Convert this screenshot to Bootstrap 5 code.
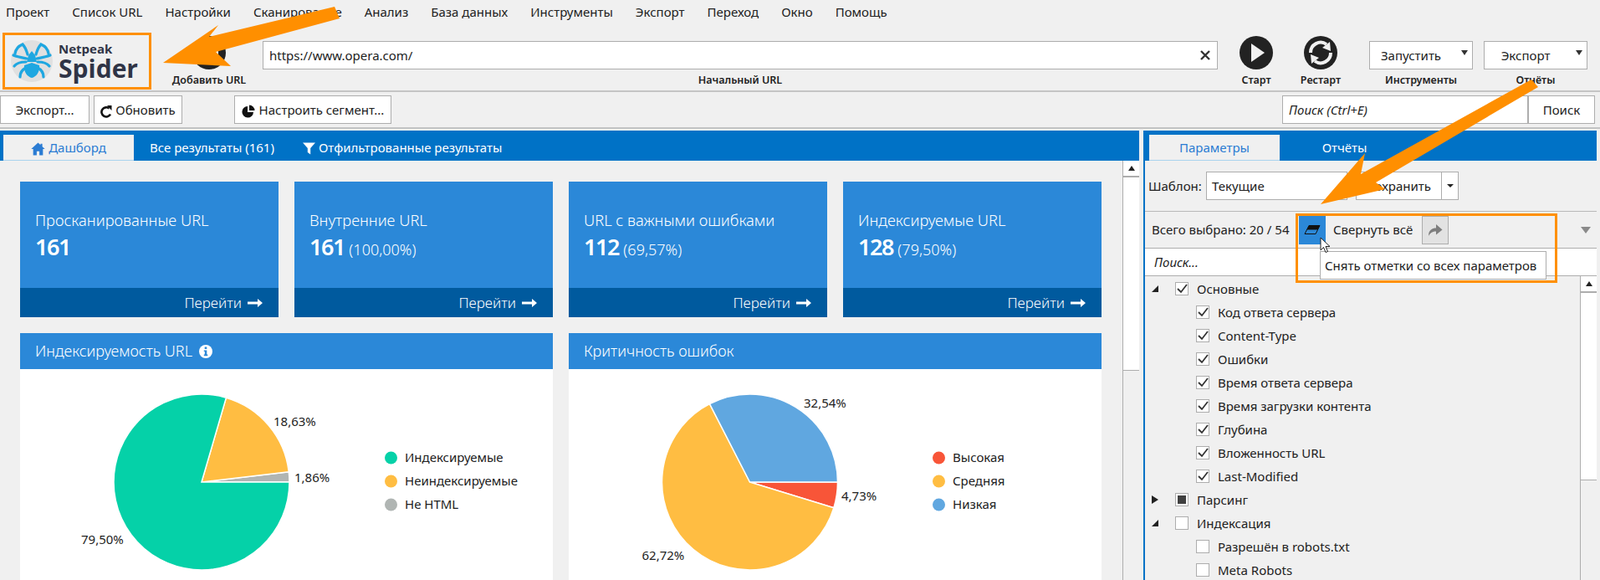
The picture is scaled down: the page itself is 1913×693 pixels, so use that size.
<!DOCTYPE html>
<html lang="ru">
<head>
<meta charset="UTF-8">
<title>Netpeak Spider</title>
<link href="https://cdn.jsdelivr.net/npm/bootstrap@5.3.2/dist/css/bootstrap.min.css" rel="stylesheet">
<style>
  html, body { height: 693px; overflow: hidden; }
  body { background: #f0f0f0; color: #222; font-family: "Noto Sans", "Liberation Sans", sans-serif; font-size: 15px; position: relative; }

  .menu-row { height: 28px; padding-left: 7px; gap: 27px; line-height: 28px; }

  .top-row { height: 82px; border-bottom: 2px solid #c4c4c4; }
  .logo-box { width: 178px; height: 68px; margin: 11px 0 0 3px; border: 3px solid #ff9000; gap: 7px; padding-left: 7px; }
  .logo-text { color: #2f3446; font-family: "Open Sans", sans-serif; font-weight: 700; }
  .logo-small { font-size: 15px; line-height: 18px; }
  .logo-big { font-size: 30px; line-height: 30px; }
  .tool-col { padding-top: 15px; }
  .field-col { padding-top: 21px; }
  .tool-label { font-size: 12.5px; font-weight: 600; line-height: 16px; margin-top: 5px; white-space: nowrap; }
  .col-add { width: 100px; margin-left: 19px; }
  .col-url { width: 1142px; margin-left: 14px; }
  .col-start { width: 60px; margin-left: 16px; }
  .col-restart { width: 60px; margin-left: 17px; }
  .col-run { width: 124px; margin-left: 28px; }
  .col-export { width: 124px; margin-left: 13px; }

  .win-btn, .win-btn:hover { background: #fff; border: 1px solid #adadad; border-radius: 0; color: #222; font-size: 15px; padding: 0 8px; height: 34px; line-height: 32px; white-space: nowrap; }
  .win-input, .win-input:focus { background: #fff; border: 1px solid #adadad; border-radius: 0; color: #222; font-size: 15px; height: 34px; padding: 0 7px; box-shadow: none; }
  .win-input::placeholder { color: #222; font-style: italic; opacity: 1; }
  .url-wrap .win-input { padding-right: 30px; }
  .url-clear { right: 9px; top: 11px; }
  .drop-btn { width: 124px; padding: 0 24px 0 0; }
  .drop-caret { right: 6px; top: 11px; width: 0; height: 0; border-left: 4px solid transparent; border-right: 4px solid transparent; border-top: 6px solid #333; }

  .action-row { height: 44px; padding-top: 4px; border-bottom: 2px solid #c4c4c4; }
  .btn-export { width: 107px; }
  .btn-refresh { width: 106px; margin-left: 5px; padding: 0 4px; }
  .btn-segment { width: 188px; margin-left: 62px; padding: 0 4px; }
  .find-input { width: 294px; margin-left: auto; }
  .find-btn { width: 80px; margin-right: 6px; }

  .main-row { margin-top: 2px; height: 537px; gap: 5px; }
  .left-side { width: 1362px; }
  .right-side { width: 542px; border-left: 2px solid #0072c6; }
  .tab-bar { background: #0072c6; height: 36px; padding: 5px 0 0 4px; flex-wrap: nowrap; }
  .right-side .tab-bar { padding-left: 5px; }
  .tab-bar .nav-link { color: #fff; height: 31px; line-height: 31px; padding: 0; text-align: center; font-size: 15px; white-space: nowrap; }
  .tab-bar .nav-link.active { background: #f0f0f0; color: #2b7cd3; border-bottom: 1px solid #a9d3ee; }
  .tab-dash { width: 156px; }
  .tab-all { margin-left: 17px; width: 153px; }
  .tab-filter { margin-left: 32px; }
  .tab-par { width: 156px; }
  .tab-rep { margin-left: 50px; width: 55px; }

  .dash-area { height: 501px; overflow: hidden; }
  .dash-inner { width: 1342px; padding: 25px 0 0 24px; }
  .stat-grid { display: grid; grid-template-columns: repeat(4, 309px); gap: 19px; }
  .stat-box { background: #2b88d8; color: #fff; height: 162px; }
  .stat-top { height: 127px; padding: 34px 0 0 19px; }
  .stat-name { font-size: 18.3px; line-height: 24px; font-weight: 300; white-space: nowrap; margin-left: -1px; }
  .stat-num { font-size: 27px; font-weight: 600; line-height: 38px; margin: 1px 0 0 -1px; letter-spacing: -1.5px; }
  .stat-pct { font-size: 18px; font-weight: 300; letter-spacing: 0; }
  .stat-foot { background: #005a9e; height: 35px; padding-right: 19px; gap: 7px; font-size: 17px; font-weight: 300; }
  .chart-grid { display: grid; grid-template-columns: repeat(2, 637px); gap: 19px; margin-top: 19px; }
  .chart-box { background: #fff; height: 295px; }
  .chart-head { background: #2b88d8; color: #fff; height: 43px; padding-left: 18px; gap: 8px; font-size: 18px; font-weight: 300; }
  .chart-box svg text { font-family: "Noto Sans", sans-serif; font-size: 15px; fill: #222; }

  .bar-track { width: 20px; border-left: 1px solid #adadad; }
  .bar-up { height: 20px; background: #fff; border-bottom: 2px solid #adadad; }
  .bar-thumb { background: #fff; border-bottom: 1px solid #adadad; }
  .dash-thumb { height: 231px; }
  .tree-thumb { height: 224px; }
  .bar-arrow { width: 0; height: 0; border-left: 4px solid transparent; border-right: 4px solid transparent; border-bottom: 6px solid #222; }

  .tpl-row { height: 61px; padding: 13px 0 0 4px; border-bottom: 1px solid #b9b9b9; }
  .tpl-label { width: 65px; line-height: 34px; white-space: nowrap; }
  .tpl-select { width: 169px; margin-left: 4px; padding: 0 6px; }
  .tpl-save { margin-left: 10px; }
  .tpl-save .win-btn:first-child { width: 103px; }
  .tpl-save .win-btn:last-child { width: 21px; padding: 0; margin-left: -1px; }
  .sel-row { height: 43px; padding-left: 8px; }
  .sel-count { width: 168px; white-space: nowrap; }
  .erase-btn { width: 32px; height: 34px; background: #2b88d8; margin-left: 8px; }
  .fold-text { margin-left: 9px; width: 106px; white-space: nowrap; }
  .redo-btn { width: 32px; height: 34px; background: #e2e2e2; border: 1px solid #adadad; }
  .sel-tri { margin-left: auto; margin-right: 7px; width: 0; height: 0; border-left: 6px solid transparent; border-right: 6px solid transparent; border-top: 8px solid #8a8a8a; }
  .tree-find { height: 34px; border-width: 1px 0; padding: 0 11px; }
  .tree-area { height: 365px; overflow: hidden; }
  .tree-list { padding-top: 1px; }
  .tree-item { height: 28px; white-space: nowrap; }
  .tree-tw { width: 36px; padding-left: 8px; }
  .tree-sub { padding-left: 61px; }
  .tw-open { width: 0; height: 0; border-bottom: 8px solid #222; border-left: 8px solid transparent; }
  .tw-shut { width: 0; height: 0; border-left: 8px solid #222; border-top: 5px solid transparent; border-bottom: 5px solid transparent; }
  .tick-box { width: 16px; height: 16px; background: #fff; border: 1px solid #adadad; margin-right: 10px; flex: none; }
  .tick-part { width: 10px; height: 10px; background: #404040; }

  .note-box { left: 1549px; top: 255px; width: 313px; height: 83px; border: 3px solid #ff9000; }
  .tip-box { left: 1578px; top: 300px; width: 271px; height: 34px; background: #fff; border: 1px solid #adadad; line-height: 32px; padding-left: 5px; white-space: nowrap; }
  .mouse-ptr { left: 1578px; top: 283px; }
  .arrow-layer { left: 0; top: 0; pointer-events: none; }
</style>
</head>
<body>

<div class="d-flex menu-row">
  <span>Проект</span><span>Список URL</span><span>Настройки</span><span>Сканирование</span><span>Анализ</span><span>База данных</span><span>Инструменты</span><span>Экспорт</span><span>Переход</span><span>Окно</span><span>Помощь</span>
</div>

<div class="d-flex align-items-start top-row">
  <div class="d-flex align-items-center logo-box">
    <svg width="50" height="50" viewBox="0 0 50 50">
      <circle cx="25" cy="25" r="25" fill="#e0e0e0"/>
      <g fill="none" stroke="#1ea7e1" stroke-linecap="round" stroke-width="3.2">
        <path d="M20 17 C18 10 16 7 14 5 C9 7 6 10 5 16"/><path d="M30 17 C32 10 34 7 36 5 C41 7 44 10 45 16"/>
        <path d="M19 22 C14 21 8 20 3 18"/><path d="M31 22 C36 21 42 20 47 18"/>
        <path d="M18 26 C12 26 7 27 4 31"/><path d="M32 26 C38 26 43 27 46 31"/>
        <path d="M18 33 C14 35 11 38 11 44"/><path d="M32 33 C36 35 39 38 39 44"/>
      </g>
      <path d="M25 13 L29 18 L31 26 H19 L21 18 Z" fill="#1ea7e1"/>
      <path d="M16 30 L25 27 L34 30 C35 38 30 44 25 45 C20 44 15 38 16 30 Z" fill="#1ea7e1"/>
    </svg>
    <div class="logo-text"><div class="logo-small">Netpeak</div><div class="logo-big">Spider</div></div>
  </div>

  <div class="d-flex flex-column align-items-center tool-col col-add">
    <svg width="40" height="40" viewBox="0 0 40 40"><circle cx="20" cy="20" r="20" fill="#222"/><path d="M18 9h4v9h9v4h-9v9h-4v-9H9v-4h9z" fill="#fff"/></svg>
    <div class="tool-label">Добавить URL</div>
  </div>

  <div class="d-flex flex-column align-items-center field-col col-url">
    <div class="position-relative w-100 url-wrap">
      <input class="form-control win-input" value="https://www.opera.com/">
      <svg class="position-absolute url-clear" width="12" height="12" viewBox="0 0 12 12"><path d="M1 1l10 10M11 1L1 11" stroke="#333" stroke-width="2.4"/></svg>
    </div>
    <div class="tool-label">Начальный URL</div>
  </div>

  <div class="d-flex flex-column align-items-center tool-col col-start">
    <svg width="40" height="40" viewBox="0 0 40 40"><circle cx="20" cy="20" r="20" fill="#222"/><path d="M14 9 L30 20 L14 31 Z" fill="#f0f0f0"/></svg>
    <div class="tool-label">Старт</div>
  </div>

  <div class="d-flex flex-column align-items-center tool-col col-restart">
    <svg width="40" height="40" viewBox="0 0 40 40"><circle cx="20" cy="20" r="20" fill="#222"/>
      <g fill="none" stroke="#f0f0f0" stroke-width="4"><path d="M8 20 A12 12 0 0 1 27 10"/><path d="M32 20 A12 12 0 0 1 13 30"/></g>
      <path d="M31 7 L32 18 L22 14 Z M9 33 L8 22 L18 26 Z" fill="#f0f0f0"/>
    </svg>
    <div class="tool-label">Рестарт</div>
  </div>

  <div class="d-flex flex-column align-items-center field-col col-run">
    <div class="position-relative">
      <button class="btn win-btn drop-btn">Запустить</button><span class="position-absolute drop-caret"></span>
    </div>
    <div class="tool-label">Инструменты</div>
  </div>

  <div class="d-flex flex-column align-items-center field-col col-export">
    <div class="position-relative">
      <button class="btn win-btn drop-btn">Экспорт</button><span class="position-absolute drop-caret"></span>
    </div>
    <div class="tool-label">Отчёты</div>
  </div>
</div>

<div class="d-flex action-row">
  <button class="btn win-btn btn-export">Экспорт...</button>
  <button class="btn win-btn btn-refresh">
    <svg width="14" height="16" viewBox="0 0 14 16"><path d="M12 11.5 A5.6 5.6 0 1 1 10.5 4.5" fill="none" stroke="#111" stroke-width="2.6"/><path d="M8 1 L13.5 1 L13.5 7 Z" fill="#111"/></svg>
    Обновить
  </button>
  <button class="btn win-btn btn-segment">
    <svg width="17" height="16" viewBox="0 0 17 16"><path d="M7 2 A6.8 6.8 0 1 0 14 9 H7 Z M9 0.5 A6.5 6.5 0 0 1 15.5 7 H9 Z" fill="#111"/></svg>
    Настроить сегмент...
  </button>
  <input class="form-control win-input find-input" placeholder="Поиск (Ctrl+E)">
  <button class="btn win-btn find-btn">Поиск</button>
</div>

<div class="d-flex main-row">
  <div class="left-side">
    <nav class="nav tab-bar">
      <a class="nav-link active tab-dash" href="#">
        <svg width="17" height="16" viewBox="0 0 16 15" fill="#2b7cd3"><path d="M8 .5 L.3 7.5 H2.5 V14.5 H6.5 V10 H9.5 V14.5 H13.5 V7.5 H15.7 L12.8 4.8 V1.5 H10.8 V3 Z"/></svg>
        Дашборд
      </a>
      <a class="nav-link tab-all" href="#">Все результаты (161)</a>
      <a class="nav-link tab-filter" href="#">
        <svg width="15" height="15" viewBox="0 0 15 15" fill="#fff"><path d="M0 .5 H15 L9.2 7 V14.5 L5.8 12 V7 Z"/></svg>
        Отфильтрованные результаты
      </a>
    </nav>
    <div class="d-flex dash-area">
      <div class="dash-inner">
        <div class="stat-grid" id="stat-grid"></div>
        <div class="chart-grid">
          <div class="chart-box">
            <div class="d-flex align-items-center chart-head">
              Индексируемость URL
              <svg width="16" height="16" viewBox="0 0 16 16"><circle cx="8" cy="8" r="8" fill="#fff"/><path d="M6.7 2.6h2.6v2.4H6.7zM5.8 6.4h3.5v5.2h1v1.6H5.8v-1.6h1V8H5.8z" fill="#2b88d8"/></svg>
            </div>
            <svg id="pie-index" width="637" height="252"></svg>
          </div>
          <div class="chart-box">
            <div class="d-flex align-items-center chart-head">Критичность ошибок</div>
            <svg id="pie-errors" width="637" height="252"></svg>
          </div>
        </div>
      </div>
      <div class="bar-track">
        <div class="d-flex align-items-center justify-content-center bar-up"><span class="bar-arrow"></span></div>
        <div class="bar-thumb dash-thumb"></div>
      </div>
    </div>
  </div>

  <div class="right-side">
    <nav class="nav tab-bar">
      <a class="nav-link active tab-par" href="#">Параметры</a>
      <a class="nav-link tab-rep" href="#">Отчёты</a>
    </nav>
    <div class="d-flex align-items-start tpl-row">
      <span class="tpl-label">Шаблон:</span>
      <div class="btn win-btn text-start tpl-select">Текущие</div>
      <div class="btn-group tpl-save">
        <button class="btn win-btn">Сохранить</button>
        <button class="btn win-btn dropdown-toggle" aria-label="Ещё"></button>
      </div>
    </div>
    <div class="d-flex align-items-center sel-row">
      <span class="sel-count">Всего выбрано: 20 / 54</span>
      <div class="d-flex align-items-center justify-content-center erase-btn">
        <svg width="20" height="11" viewBox="0 0 20 11"><path d="M6 .5 H19 L14 10.5 H1 Z" fill="none" stroke="#111"/><path d="M6 .5 H19 L16.5 5.5 H3.5 Z" fill="#111"/></svg>
      </div>
      <span class="fold-text">Свернуть всё</span>
      <div class="d-flex align-items-center justify-content-center redo-btn">
        <svg width="18" height="16" viewBox="0 0 18 16"><path d="M1 15 C1 8 5 5.5 10 5.5 V1 L17.5 7.5 L10 13.5 V9.5 C6 9.5 3 11 1 15 Z" fill="#7d7d7d"/></svg>
      </div>
      <span class="sel-tri"></span>
    </div>
    <input class="form-control win-input tree-find" placeholder="Поиск...">
    <div class="d-flex tree-area">
      <div class="flex-grow-1 tree-list" id="tree-list"></div>
      <div class="bar-track">
        <div class="d-flex align-items-center justify-content-center bar-up"><span class="bar-arrow"></span></div>
        <div class="bar-thumb tree-thumb"></div>
      </div>
    </div>
  </div>
</div>

<!-- annotation layer drawn over the app screenshot -->
<div class="position-absolute note-box"></div>
<div class="position-absolute tip-box">Снять отметки со всех параметров</div>
<svg class="position-absolute mouse-ptr" width="14" height="20" viewBox="0 0 14 20"><path d="M1 1 V16 L4.5 12.5 L7 18.5 L9.5 17.5 L7 11.5 H12 Z" fill="#fff" stroke="#222"/></svg>
<svg class="position-absolute arrow-layer" width="1913" height="693" viewBox="0 0 1913 693">
  <path d="M195 75 L261 30 L250 44 L400 8 L406 22 L258 62 L276 79 Z" fill="#ff8f00"/>
  <path d="M1579 244 L1632 183 L1627 208 L1831 95 L1839 104 L1645 218 L1656 226 Z" fill="#ff8f00"/>
</svg>

<script src="https://cdn.jsdelivr.net/npm/bootstrap@5.3.2/dist/js/bootstrap.bundle.min.js"></script>
<script>
  const stats = [
    { name: "Просканированные URL", num: "161", pct: "" },
    { name: "Внутренние URL", num: "161", pct: "(100,00%)" },
    { name: "URL с важными ошибками", num: "112", pct: "(69,57%)" },
    { name: "Индексируемые URL", num: "128", pct: "(79,50%)" }
  ];
  document.getElementById("stat-grid").innerHTML = stats.map(s => `
    <div class="stat-box">
      <div class="stat-top">
        <div class="stat-name">${s.name}</div>
        <div class="stat-num">${s.num} <span class="stat-pct">${s.pct}</span></div>
      </div>
      <div class="d-flex align-items-center justify-content-end stat-foot">
        Перейти
        <svg width="18" height="12" viewBox="0 0 18 12" fill="#fff"><path d="M0 4.5 H12 V1 L18 6 L12 11 V7.5 H0 Z"/></svg>
      </div>
    </div>`).join("");

  // tree rows: level, twist, state, label
  const tick = '<svg width="14" height="14" viewBox="0 0 14 14"><path d="M2 7 L6 11 L13 2" fill="none" stroke="#333" stroke-width="1.8"/></svg>';
  const rows = [
    [0, "open", "on", "Основные"],
    [1, "", "on", "Код ответа сервера"],
    [1, "", "on", "Content-Type"],
    [1, "", "on", "Ошибки"],
    [1, "", "on", "Время ответа сервера"],
    [1, "", "on", "Время загрузки контента"],
    [1, "", "on", "Глубина"],
    [1, "", "on", "Вложенность URL"],
    [1, "", "on", "Last-Modified"],
    [0, "shut", "part", "Парсинг"],
    [0, "open", "off", "Индексация"],
    [1, "", "off", "Разрешён в robots.txt"],
    [1, "", "off", "Meta Robots"]
  ];
  document.getElementById("tree-list").innerHTML = rows.map(([lvl, tw, st, label]) => {
    const mark = st === "on" ? tick : st === "part" ? '<span class="tick-part"></span>' : "";
    const twist = lvl ? "" : `<span class="d-flex tree-tw"><span class="tw-${tw}"></span></span>`;
    return `<div class="d-flex align-items-center tree-item ${lvl ? "tree-sub" : ""}">${twist}<span class="d-flex align-items-center justify-content-center tick-box">${mark}</span>${label}</div>`;
  }).join("");

  // pies: slices go counterclockwise from 3 o'clock when dir is -1
  function drawPie(id, cx, dir, slices, legendX) {
    const r = 105, cy = 135;
    let a = 0, out = "";
    for (const s of slices) {
      const b = a + s.pct * 3.6;
      const p = d => (cx + r * Math.cos(d * Math.PI / 180)).toFixed(1) + " " + (cy + dir * r * Math.sin(d * Math.PI / 180)).toFixed(1);
      out += `<path d="M${cx} ${cy} L${p(a)} A${r} ${r} 0 ${s.pct > 50 ? 1 : 0} ${dir < 0 ? 0 : 1} ${p(b)} Z" fill="${s.color}" stroke="#fff" stroke-width="1.5"/>`;
      out += `<text x="${s.lx}" y="${s.ly}">${s.label}</text>`;
      const y = 106 + s.row * 28;
      out += `<circle cx="${legendX}" cy="${y}" r="7.5" fill="${s.color}"/><text x="${legendX + 16.5}" y="${y + 5}">${s.name}</text>`;
      a = b;
    }
    document.getElementById(id).innerHTML = out;
  }
  drawPie("pie-index", 217, -1, [
    { pct: 1.86, color: "#b0b5b3", label: "1,86%", name: "Не HTML", lx: 328, ly: 135, row: 2 },
    { pct: 18.63, color: "#ffbd42", label: "18,63%", name: "Неиндексируемые", lx: 303, ly: 68, row: 1 },
    { pct: 79.5, color: "#05d1a8", label: "79,50%", name: "Индексируемые", lx: 73, ly: 209, row: 0 }
  ], 443.5);
  drawPie("pie-errors", 216.5, 1, [
    { pct: 4.73, color: "#f85538", label: "4,73%", name: "Высокая", lx: 326, ly: 157, row: 0 },
    { pct: 62.72, color: "#ffbd42", label: "62,72%", name: "Средняя", lx: 87.5, ly: 228, row: 1 },
    { pct: 32.54, color: "#60a7e0", label: "32,54%", name: "Низкая", lx: 281, ly: 46, row: 2 }
  ], 442.5);
</script>
</body>
</html>
